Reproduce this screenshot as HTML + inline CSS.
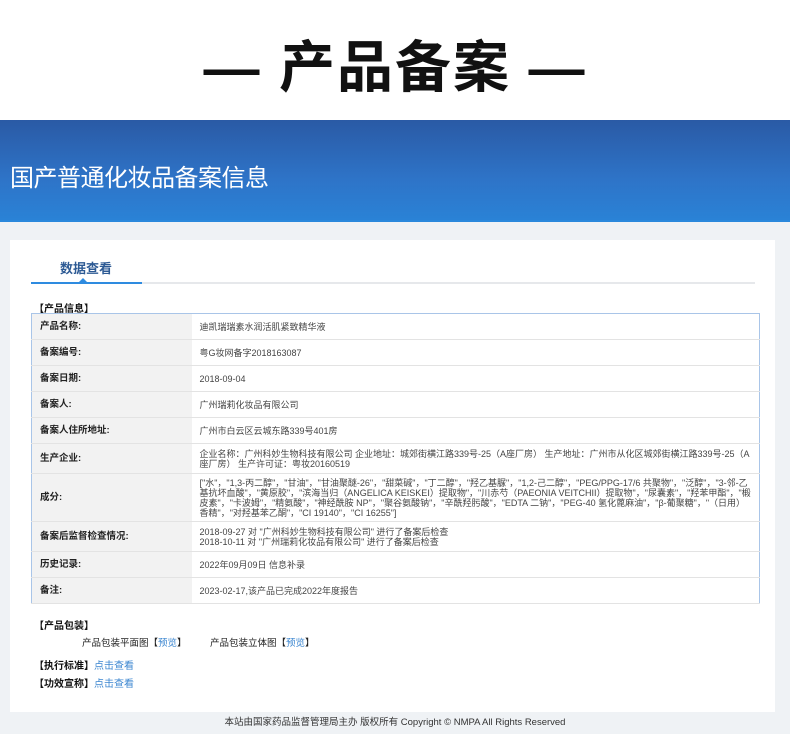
<!DOCTYPE html>
<html><head><meta charset="utf-8"><style>
*{margin:0;padding:0;box-sizing:border-box}
body{width:790px;height:745px;background:#fff;font-family:"Liberation Sans","Noto Sans CJK SC",sans-serif;position:relative;overflow:hidden;color:#333}
.t{position:absolute;top:30px;left:0;width:790px;text-align:center;font-size:56px;font-weight:bold;color:#111;line-height:76px;letter-spacing:2px}
.ban{position:absolute;top:120px;left:0;width:790px;height:102px;background:linear-gradient(180deg,#2a5aa5 0%,#2e74c8 60%,#2a82d6 100%);border-bottom:2px solid #2a88dc}
.ban span{position:absolute;left:10px;top:38px;color:#fff;font-size:24px;letter-spacing:-0.5px}
.gray{position:absolute;top:222px;left:0;width:790px;height:512px;background:#eff2f5}
.card{position:absolute;top:240px;left:10px;width:765px;height:472px;background:#fff}
.tab{position:absolute;left:60px;top:258px;font-size:13px;font-weight:bold;color:#2d5a94}
.ul{position:absolute;left:31px;top:282px;width:724px;height:2px;background:#e6e8eb}
.ul2{position:absolute;left:31px;top:282px;width:111px;height:2px;background:#2e8be0}
.tri{position:absolute;left:79px;top:278px;border:4px solid transparent;border-bottom-color:#2e8be0;border-top:0}
.h{position:absolute;font-size:10px;font-weight:bold;color:#111}
table{position:absolute;left:31px;top:313px;width:729px;border-collapse:collapse;border:1px solid #a9c5e8;font-size:9px}
td{border-bottom:1px solid #e3e3e3;padding:0 8px;line-height:10px;color:#444}
td.l{width:160px;background:#f2f2f2;font-weight:bold;color:#222;font-size:9.5px}
a{color:#3b86d0;text-decoration:none}
.s{position:absolute;font-size:9.5px;color:#222}
.f{position:absolute;top:714px;width:790px;text-align:center;font-size:9.5px;color:#333}
</style></head><body>
<div class="t">— 产品备案 —</div>
<div class="ban"><span>国产普通化妆品备案信息</span></div>
<div class="gray"></div>
<div class="card"></div>
<div class="tab">数据查看</div>
<div class="ul"></div><div class="ul2"></div><div class="tri"></div>
<div class="h" style="left:34px;top:300px">【产品信息】</div>
<table>
<tr style="height:26px"><td class="l">产品名称:</td><td>迪凯瑞瑞素水润活肌紧致精华液</td></tr>
<tr style="height:26px"><td class="l">备案编号:</td><td>粤G妆网备字2018163087</td></tr>
<tr style="height:26px"><td class="l">备案日期:</td><td>2018-09-04</td></tr>
<tr style="height:26px"><td class="l">备案人:</td><td>广州瑞莉化妆品有限公司</td></tr>
<tr style="height:26px"><td class="l">备案人住所地址:</td><td>广州市白云区云城东路339号401房</td></tr>
<tr style="height:30px"><td class="l">生产企业:</td><td>企业名称：广州科妙生物科技有限公司 企业地址：城郊街横江路339号-25（A座厂房） 生产地址：广州市从化区城郊街横江路339号-25（A座厂房） 生产许可证：粤妆20160519</td></tr>
<tr style="height:48px"><td class="l">成分:</td><td>["水"，"1,3-丙二醇"，"甘油"，"甘油聚醚-26"，"甜菜碱"，"丁二醇"，"羟乙基脲"，"1,2-己二醇"，"PEG/PPG-17/6 共聚物"，"泛醇"，"3-邻-乙基抗坏血酸"，"黄原胶"，"滨海当归（ANGELICA KEISKEI）提取物"，"川赤芍（PAEONIA VEITCHII）提取物"，"尿囊素"，"羟苯甲酯"，"椴皮素"，"卡波姆"，"精氨酸"，"神经酰胺 NP"，"聚谷氨酸钠"，"辛酰羟肟酸"，"EDTA 二钠"，"PEG-40 氢化蓖麻油"，"β-葡聚糖"，"（日用）香精"，"对羟基苯乙酮"，"CI 19140"，"CI 16255"]</td></tr>
<tr style="height:30px"><td class="l">备案后监督检查情况:</td><td>2018-09-27 对 "广州科妙生物科技有限公司" 进行了备案后检查<br>2018-10-11 对 "广州瑞莉化妆品有限公司" 进行了备案后检查</td></tr>
<tr style="height:26px"><td class="l">历史记录:</td><td>2022年09月09日 信息补录</td></tr>
<tr style="height:26px"><td class="l">备注:</td><td>2023-02-17,该产品已完成2022年度报告</td></tr>
</table>
<div class="h" style="left:34px;top:617px">【产品包装】</div>
<div class="s" style="left:82px;top:635px">产品包装平面图【<a>预览</a>】</div>
<div class="s" style="left:210px;top:635px">产品包装立体图【<a>预览</a>】</div>
<div class="h" style="left:34px;top:657px">【执行标准】<a style="font-weight:normal">点击查看</a></div>
<div class="h" style="left:34px;top:675px">【功效宣称】<a style="font-weight:normal">点击查看</a></div>
<div class="f">本站由国家药品监督管理局主办 版权所有 Copyright © NMPA All Rights Reserved</div>
</body></html>
